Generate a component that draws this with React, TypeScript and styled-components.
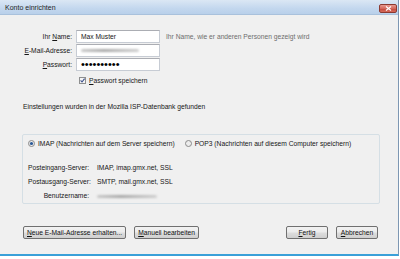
import React from "react";
import styled, { createGlobalStyle } from "styled-components";

const GlobalStyle = createGlobalStyle`
    html, body {
        margin: 0;
        background: #ffffff;
    }
    body {
        font-family: "Liberation Sans", Arial, sans-serif;
        font-size: 6.7px;
        color: #161616;
    }
`;

const Window = styled.div`
    width: 399px;
    height: 256px;
    box-sizing: border-box;
    background: #f0f0f0;
    border-right: 1px solid #7d97b3;
    border-bottom: 2px solid #3aa0d8;
    display: flex;
    flex-direction: column;
`;

const TitleBar = styled.div`
    height: 15px;
    flex: none;
    display: flex;
    align-items: flex-start;
    justify-content: space-between;
    padding: 0 1px 0 5px;
    background: linear-gradient(#dbe7f4, #c3d7ee 60%, #b9d0ea);
    border-bottom: 1px solid #a9c1dc;
    box-sizing: border-box;
`;

const Title = styled.span`
    line-height: 15px;
    font-size: 7px;
    color: #1f1f1f;
`;

const CloseButton = styled.div`
    width: 18px;
    height: 9px;
    margin-top: 4px;
    box-sizing: border-box;
    border: 1px solid #8c3a31;
    border-radius: 2px;
    background: linear-gradient(#e89a90, #d4685c 50%, #c2463a 51%, #d66a5a);
    display: flex;
    align-items: center;
    justify-content: center;
`;

const Form = styled.div`
    display: grid;
    grid-template-columns: 72px 84px auto;
    grid-auto-rows: 13px;
    column-gap: 4px;
    row-gap: 1px;
    align-items: center;
    margin-top: 15px;
`;

const Label = styled.span`
    text-align: right;
    white-space: nowrap;
`;

const Field = styled.div`
    height: 13px;
    box-sizing: border-box;
    border: 1px solid #c7ccd4;
    border-top-color: #abadb3;
    background: #ffffff;
    padding-left: 4px;
    display: flex;
    align-items: center;
    overflow: hidden;
    white-space: nowrap;
`;

const Dots = styled.span`
    font-size: 11px;
    line-height: 1;
    color: #000;
`;

const Blurred = styled.span<{ $width: number }>`
    display: inline-block;
    width: ${({ $width }) => $width}px;
    height: 3px;
    border-radius: 2px;
    background: linear-gradient(90deg, #c9c9c9, #a9a9a9 40%, #bdbdbd 70%, #cfcfcf);
    filter: blur(1px);
`;

const Hint = styled.span`
    color: #6d6d6d;
    padding-left: 2px;
    white-space: nowrap;
`;

const CheckRow = styled.div`
    grid-column: 2 / span 2;
    margin-top: 4px;
    height: 9px;
    display: flex;
    align-items: center;
    gap: 3px;
    padding-left: 3px;
`;

const Description = styled.div`
    margin: 17px 0 0 23px;
    line-height: 9px;
`;

const GroupBox = styled.div`
    margin: 23px 0 0 22px;
    width: 358px;
    height: 70px;
    box-sizing: border-box;
    border: 1px solid #d5dfe5;
    border-radius: 2px;
    padding: 4px 0 0 5px;
`;

const RadioRow = styled.div`
    display: flex;
    height: 9px;
    align-items: center;
    gap: 10px;
`;

const Option = styled.div`
    display: flex;
    align-items: center;
    gap: 3px;
    white-space: nowrap;
`;

const InfoGrid = styled.div`
    display: grid;
    grid-template-columns: 61px auto;
    grid-auto-rows: 14px;
    column-gap: 8px;
    align-items: center;
    margin-top: 12px;
`;

const ButtonBar = styled.div`
    display: flex;
    gap: 8px;
    margin-top: 22px;
    padding: 0 20px 0 23px;
`;

const Spacer = styled.div`
    flex: 1;
`;

const Button = styled.div`
    height: 13px;
    min-width: 42px;
    box-sizing: border-box;
    padding: 0 3px;
    border: 1px solid #707070;
    border-radius: 2px;
    background: linear-gradient(#f2f2f2, #ebebeb 48%, #dddddd 52%, #cfcfcf);
    display: flex;
    align-items: center;
    justify-content: center;
    white-space: nowrap;
    color: #111;
`;

const CheckBox = () => (
    <svg width="7" height="7" viewBox="0 0 7 7">
        <rect x="0.5" y="0.5" width="6" height="6" fill="#f4f4f4" stroke="#8e8f8f" />
        <path d="M1.6 3.4 L3 5 L5.6 1.6" fill="none" stroke="#3a4f8a" strokeWidth="1.1" />
    </svg>
);

const Radio = ({ checked }: { checked?: boolean }) => (
    <svg width="7" height="7" viewBox="0 0 7 7">
        <circle cx="3.5" cy="3.5" r="3" fill="#ececec" stroke="#8a8a8a" />
        {checked && <circle cx="3.5" cy="3.5" r="1.6" fill="#2b5a98" />}
    </svg>
);

export default function App() {
    return (
        <>
            <GlobalStyle />
            <Window>
                <TitleBar>
                    <Title>Konto einrichten</Title>
                    <CloseButton>
                        <svg width="7" height="5" viewBox="0 0 7 5">
                            <path d="M1 0.5 L6 4.5 M6 0.5 L1 4.5" stroke="#ffffff" strokeWidth="1.2" />
                        </svg>
                    </CloseButton>
                </TitleBar>

                <Form>
                    <Label>Ihr <u>N</u>ame:</Label>
                    <Field>Max Muster</Field>
                    <Hint>Ihr Name, wie er anderen Personen gezeigt wird</Hint>

                    <Label><u>E</u>-Mail-Adresse:</Label>
                    <Field><Blurred $width={58} /></Field>
                    <span />

                    <Label><u>P</u>asswort:</Label>
                    <Field><Dots>••••••••••</Dots></Field>
                    <span />

                    <span />
                    <CheckRow>
                        <CheckBox />
                        <span><u>P</u>asswort speichern</span>
                    </CheckRow>
                </Form>

                <Description>Einstellungen wurden in der Mozilla ISP-Datenbank gefunden</Description>

                <GroupBox>
                    <RadioRow>
                        <Option>
                            <Radio checked />
                            <span>IMAP (Nachrichten auf dem Server speichern)</span>
                        </Option>
                        <Option>
                            <Radio />
                            <span>POP3 (Nachrichten auf diesem Computer speichern)</span>
                        </Option>
                    </RadioRow>
                    <InfoGrid>
                        <Label>Posteingang-Server:</Label>
                        <span>IMAP, imap.gmx.net, SSL</span>
                        <Label>Postausgang-Server:</Label>
                        <span>SMTP, mail.gmx.net, SSL</span>
                        <Label>Benutzername:</Label>
                        <span><Blurred $width={60} /></span>
                    </InfoGrid>
                </GroupBox>

                <ButtonBar>
                    <Button><u>N</u>eue E-Mail-Adresse erhalten...</Button>
                    <Button><u>M</u>anuell bearbeiten</Button>
                    <Spacer />
                    <Button><u>F</u>ertig</Button>
                    <Button><u>A</u>bbrechen</Button>
                </ButtonBar>
            </Window>
        </>
    );
}
